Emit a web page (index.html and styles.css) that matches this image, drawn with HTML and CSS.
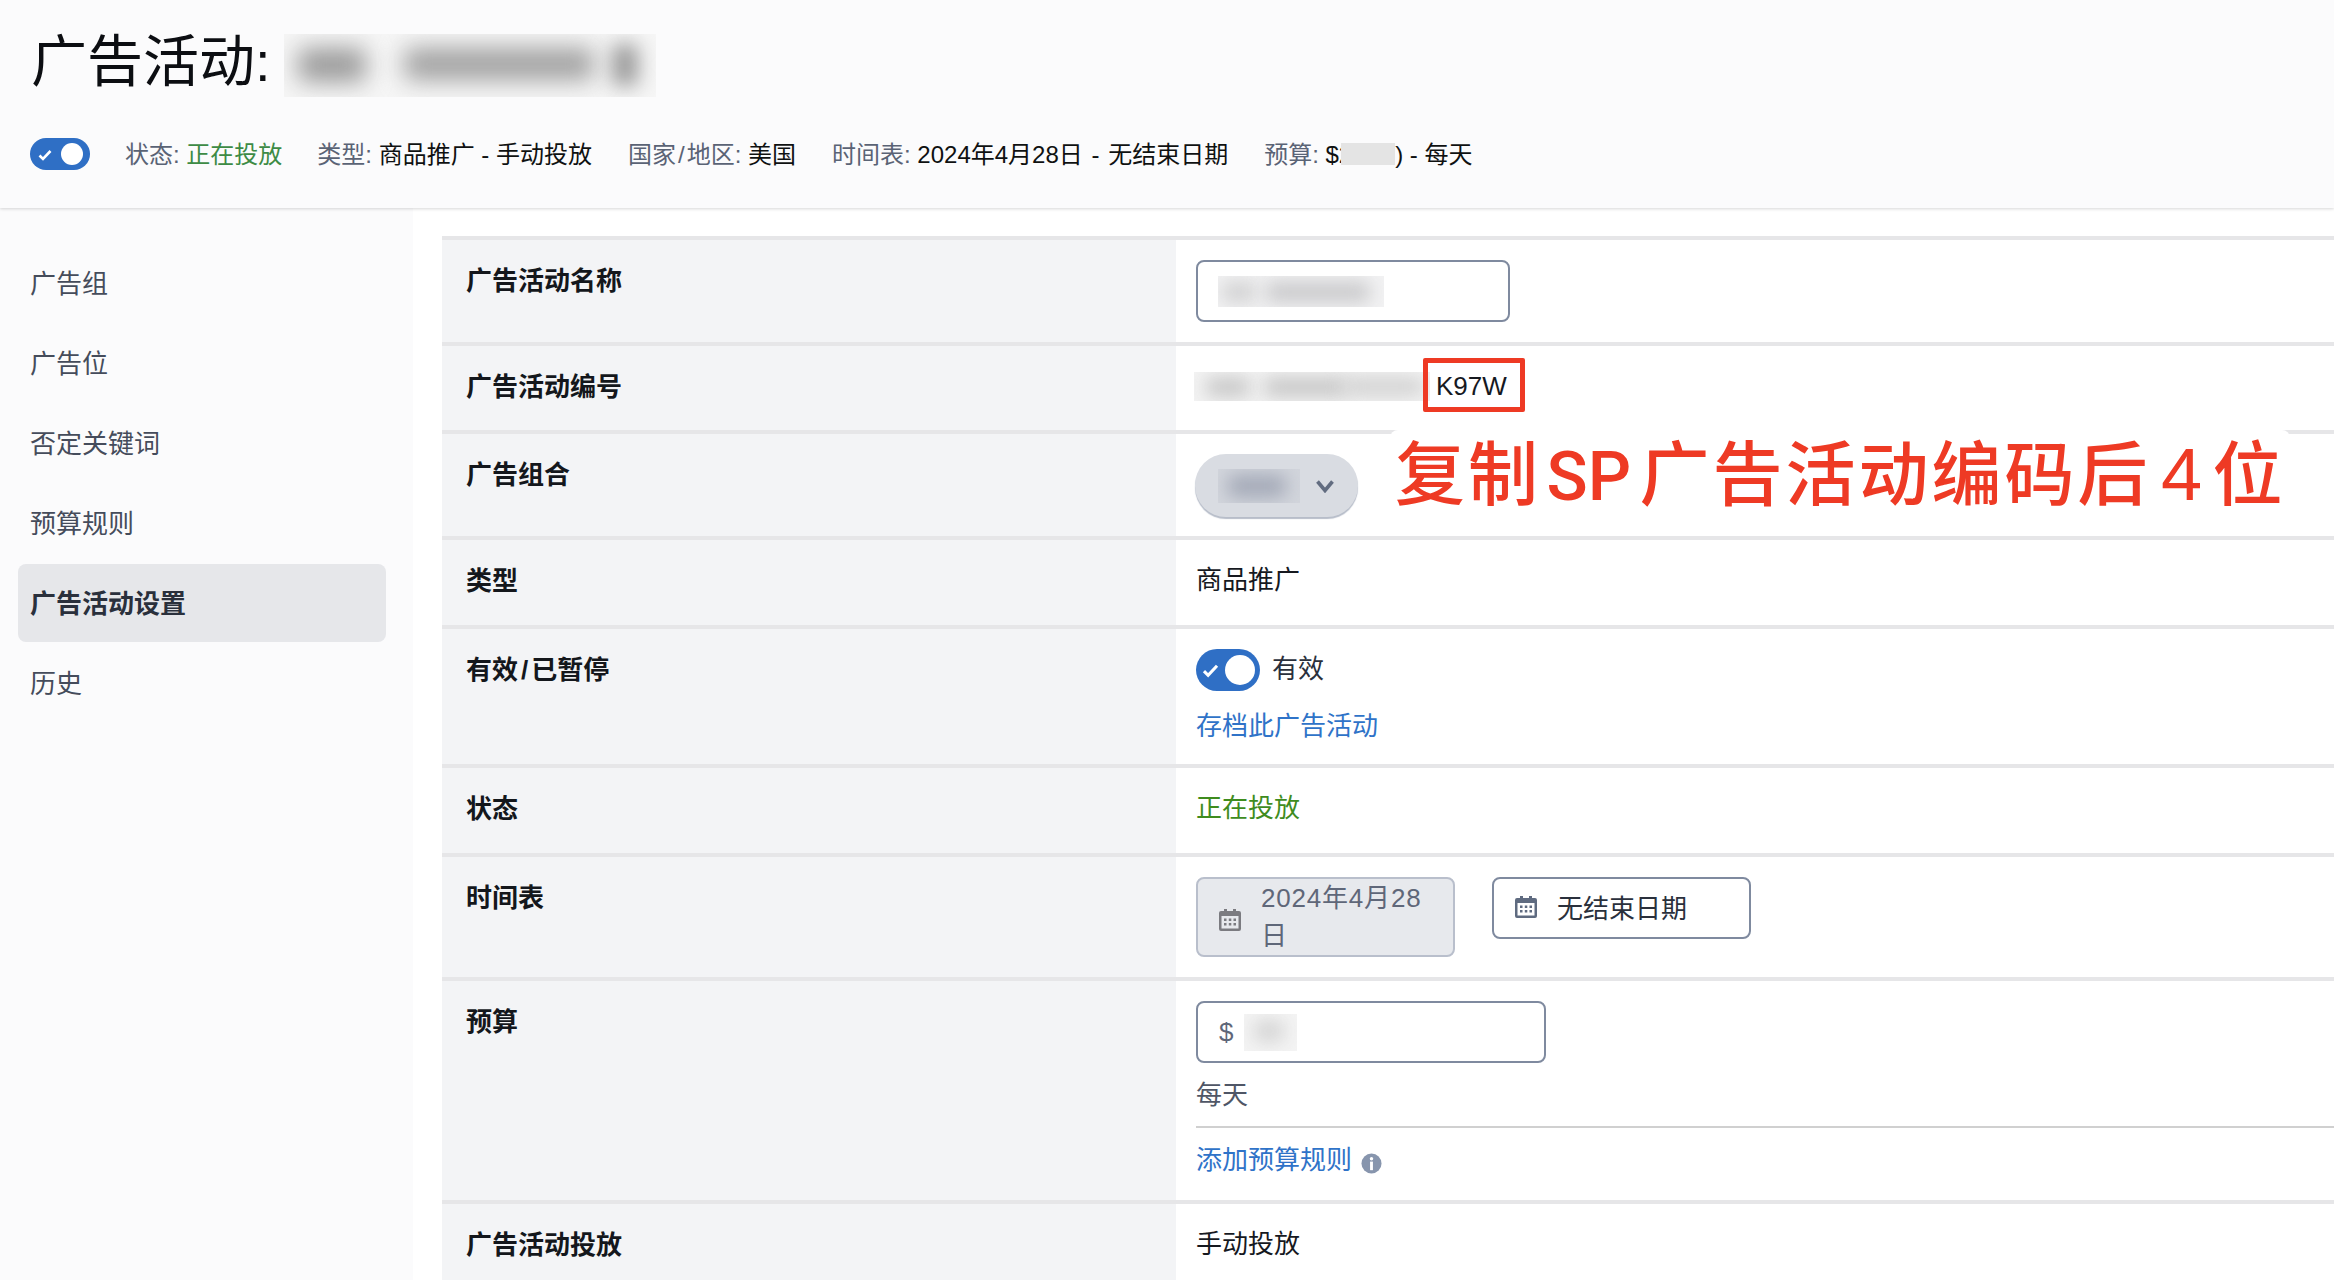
FILE: index.html
```html
<!DOCTYPE html>
<html lang="zh-CN">
<head>
<meta charset="utf-8">
<title>广告活动设置</title>
<link rel="stylesheet" href="styles.css">
</head>
<body>
<header class="header">
  <div class="title-row">
    <h1 class="title">广告活动:</h1>
    <div class="blur-box title-blur"><i class="blob t1"></i><i class="blob t2"></i><i class="blob t3"></i></div>
  </div>
  <div class="meta">
    <span class="toggle toggle-sm"><svg class="check" viewBox="0 0 16 16"><path d="M2.500 8.500l3.500 3.500L13.500 4" fill="none" stroke="#fff" stroke-width="2.600"/></svg><i class="knob"></i></span>
    <span class="meta-item first"><span class="key">状态:</span> <span class="green-soft">正在投放</span></span>
    <span class="meta-item"><span class="key">类型:</span> 商品推广 - 手动投放</span>
    <span class="meta-item"><span class="key">国家<span class="slash-sm">/</span>地区:</span> 美国</span>
    <span class="meta-item"><span class="key">时间表:</span> 2024年4月28日<span class="dash"> - </span>无结束日期</span>
    <span class="meta-item"><span class="key">预算:</span> $2<i class="budget-mask"></i>) - 每天</span>
  </div>
</header>
<div class="main">
  <nav class="sidebar">
    <a class="nav-item">广告组</a>
    <a class="nav-item">广告位</a>
    <a class="nav-item">否定关键词</a>
    <a class="nav-item">预算规则</a>
    <a class="nav-item active">广告活动设置</a>
    <a class="nav-item">历史</a>
  </nav>
  <section class="content">
    <div class="row">
      <div class="label">广告活动名称</div>
      <div class="value form-value">
        <div class="input name-input"><div class="blur-box name-blur"><i class="blob n1"></i><i class="blob n2"></i></div></div>
      </div>
    </div>
    <div class="row">
      <div class="label">广告活动编号</div>
      <div class="value id-value"><div class="blur-box id-blur"><i class="blob i1"></i><i class="blob i2"></i><i class="blob i3"></i></div><span class="id-tail">K97W</span></div>
    </div>
    <div class="row">
      <div class="label">广告组合</div>
      <div class="value pill-value">
        <div class="pill"><div class="blur-box pill-blur"><i class="blob p1"></i></div>
          <svg class="chevron" viewBox="0 0 20 14"><path d="M2.500 2.500l7.500 9 7.500-9" fill="none" stroke="#626c80" stroke-width="3.600"/></svg>
        </div>
      </div>
    </div>
    <div class="row">
      <div class="label">类型</div>
      <div class="value">商品推广</div>
    </div>
    <div class="row">
      <div class="label">有效<span class="slash">/</span>已暂停</div>
      <div class="value form-value">
        <div class="toggle-line">
          <span class="toggle"><svg class="check" viewBox="0 0 16 16"><path d="M2.500 8.500l3.500 3.500L13.500 4" fill="none" stroke="#fff" stroke-width="2.600"/></svg><i class="knob"></i></span>
          <span class="toggle-text">有效</span>
        </div>
        <a class="link archive">存档此广告活动</a>
      </div>
    </div>
    <div class="row">
      <div class="label">状态</div>
      <div class="value green">正在投放</div>
    </div>
    <div class="row">
      <div class="label">时间表</div>
      <div class="value form-value dates">
        <div class="date disabled">
          <svg class="cal" viewBox="0 0 22 22"><path d="M5 0h3v2h6V0h3v2h3a2 2 0 0 1 2 2v16a2 2 0 0 1-2 2H2a2 2 0 0 1-2-2V4a2 2 0 0 1 2-2h3z" fill="#7b7b80"/><rect x="2.500" y="7" width="17" height="12.500" fill="#e7e9ed"/><path d="M5 9.500h2.500V12H5zM9.800 9.500h2.500V12H9.800zM14.500 9.500H17V12h-2.500zM5 14h2.500v2.500H5zM9.800 14h2.500v2.500H9.800zM14.500 14H17v2.500h-2.500z" fill="#7b7b80"/></svg>
          <span class="date-text">2024年4月28日</span>
        </div>
        <div class="date">
          <svg class="cal" viewBox="0 0 22 22"><path d="M5 0h3v2h6V0h3v2h3a2 2 0 0 1 2 2v16a2 2 0 0 1-2 2H2a2 2 0 0 1-2-2V4a2 2 0 0 1 2-2h3z" fill="#5f6b80"/><rect x="2.500" y="7" width="17" height="12.500" fill="#fff"/><path d="M5 9.500h2.500V12H5zM9.800 9.500h2.500V12H9.800zM14.500 9.500H17V12h-2.500zM5 14h2.500v2.500H5zM9.800 14h2.500v2.500H9.800zM14.500 14H17v2.500h-2.500z" fill="#5f6b80"/></svg>
          <span class="date-text plain">无结束日期</span>
        </div>
      </div>
    </div>
    <div class="row">
      <div class="label">预算</div>
      <div class="value form-value budget">
        <div class="input budget-input"><span class="dollar">$</span><div class="blur-box amount-blur"><i class="blob a1"></i></div></div>
        <div class="per-day">每天</div>
        <div class="divider"></div>
        <div class="rule-line"><a class="link">添加预算规则</a>
          <svg class="info" viewBox="0 0 22 22"><circle cx="11" cy="11" r="10.500" fill="#8795ad"/><circle cx="11" cy="6" r="1.800" fill="#fff"/><rect x="9.500" y="9" width="3" height="9" fill="#fff"/></svg>
        </div>
      </div>
    </div>
    <div class="row">
      <div class="label">广告活动投放</div>
      <div class="value">手动投放</div>
    </div>
    <div class="id-highlight"></div>
    <div class="callout">复制 <span class="callout-latin">SP</span> 广告活动编码后 <span class="callout-num">4</span> 位</div>
  </section>
</div>
</body>
</html>
```

FILE: styles.css
```css
* { box-sizing: border-box; }
html, body { margin: 0; height: 1280px; overflow: hidden; background: #fff; }
body {
  font-family: "Liberation Sans", "Noto Sans CJK SC", sans-serif;
  font-size: 26px;
  line-height: 36px;
  color: #16191f;
}
a { color: inherit; text-decoration: none; }

.header {
  height: 208px;
  padding: 29px 0 0 32px;
  background: #fbfbfc;
  box-shadow: 0 1px 3px rgba(0, 0, 0, .16);
  position: relative;
}
.title-row { display: flex; align-items: flex-start; height: 64px; }
.title { margin: 1px 0 0 -1px; font-size: 56px; line-height: 64px; font-weight: 400; color: #0c0e12; }
.meta {
  display: flex; align-items: center; height: 32px; margin: 45px 0 0 -2px;
  font-size: 24px; color: #0f1111; white-space: nowrap;
}
.meta-item { margin-right: 36px; padding-top: 2px; }
.meta-item.first { margin-right: 35px; }
.key { color: #5a6375; }
.slash-sm { padding: 0 2px; }
.green-soft { color: #3d8b45; }
.dash { margin: 0 2px; }
.budget-mask { display: inline-block; width: 54px; height: 22px; margin-left: -11px; background: #e4e4e4; vertical-align: -2px; position: relative; }

.blur-box { overflow: hidden; position: relative; flex: none; }
.blob { position: absolute; display: block; filter: blur(9px); border-radius: 6px; }

.title-blur { width: 372px; height: 63px; margin: 5px 0 0 13px; background: #f6f6f6; }
.t1 { left: 14px; top: 14px; width: 68px; height: 34px; background: #9a9a9a; filter: blur(12px); }
.t2 { left: 120px; top: 14px; width: 190px; height: 32px; background: #a0a0a0; filter: blur(12px); }
.t3 { left: 328px; top: 10px; width: 26px; height: 42px; background: #999; filter: blur(10px); }

.toggle {
  position: relative; display: inline-block; flex: none; width: 64px; height: 42px;
  border-radius: 21px; background: #2f6fc5;
}
.toggle .knob { position: absolute; right: 5px; top: 6px; width: 30px; height: 30px; border-radius: 50%; background: #fff; }
.toggle .check { position: absolute; left: 5px; top: 12px; width: 19px; height: 19px; }
.toggle-sm { width: 60px; height: 32px; margin-right: 35px; border-radius: 16px; }
.toggle-sm .knob { right: 7px; top: 5px; width: 22px; height: 22px; }
.toggle-sm .check { left: 7px; top: 9px; width: 16px; height: 16px; }

.main { display: flex; height: 1072px; }
.sidebar { width: 413px; flex: none; padding: 36px 27px 0 18px; background: #fbfbfc; display: flex; flex-direction: column; gap: 2px; }
.nav-item { display: flex; align-items: center; height: 78px; padding: 1px 0 0 12px; border-radius: 8px; color: #454c5b; }
.nav-item.active { background: #e6e7ea; font-weight: 700; color: #2a303c; }

.content { flex: 1; min-width: 0; position: relative; padding: 28px 0 0 29px; }
.row { display: grid; grid-template-columns: 734px 1fr; border-top: 4px solid #e6e6e8; }
.label { background: #f3f4f6; padding: 23px 24px 0; font-weight: 700; color: #14171c; }
.slash { padding: 0 3px; }
.value { padding: 22px 0 27px 20px; color: #16191f; }
.form-value { padding: 20px 0 20px 20px; }
.green { color: #3f8c1e; }
.link { color: #2f73c8; }

.input { display: flex; align-items: center; height: 62px; border: 2px solid #7f8a9f; border-radius: 8px; background: #fff; }
.name-input { width: 314px; padding-left: 20px; }
.name-blur { width: 166px; height: 31px; background: #f2f2f3; }
.n1 { left: 4px; top: 6px; width: 34px; height: 20px; background: #d0d0d1; }
.n2 { left: 48px; top: 6px; width: 104px; height: 20px; background: #c8c8ca; }

.id-value { display: flex; align-items: center; padding-left: 18px; padding-bottom: 26px; height: 84px; }
.id-blur { width: 236px; height: 29px; background: #f3f3f3; }
.i1 { left: 12px; top: 6px; width: 44px; height: 18px; background: #c4c4c4; }
.i2 { left: 70px; top: 6px; width: 84px; height: 18px; background: #c4c4c4; }
.i3 { left: 150px; top: 6px; width: 80px; height: 17px; background: #cfcfcf; }
.id-tail { margin-left: 6px; }

.pill-value { padding: 20px 0 19px 19px; }
.pill {
  display: flex; align-items: center; width: 163px; height: 63px; padding: 0 18px 0 23px;
  border-radius: 31px; background: #d9dce2; box-shadow: 0 2px 1px #b7bdc9;
}
.pill-blur { width: 82px; height: 34px; background: #d2d5dc; }
.p1 { left: 10px; top: 6px; width: 58px; height: 22px; background: #a2a8b6; }
.chevron { width: 20px; height: 14px; margin-left: 15px; }

.toggle-line { display: flex; align-items: center; height: 42px; gap: 12px; }
.toggle-text { color: #2a303c; margin-top: -2px; }
.archive { display: block; margin: 17px 0 0; }

.dates { display: flex; align-items: flex-start; gap: 37px; }
.date {
  display: flex; align-items: center; width: 259px; height: 62px; padding: 0 16px 0 21px;
  border: 2px solid #7f8a9f; border-radius: 8px; background: #fff; color: #2a303c;
}
.date.disabled { height: 80px; background: #e7e9ed; border-color: #b9bfcc; color: #5f6779; line-height: 38px; }
.date.disabled .cal { margin-top: 6px; }
.date.disabled .date-text { letter-spacing: .8px; }
.cal { width: 22px; height: 22px; flex: none; margin-right: 20px; margin-top: -2px; }
.date-text { display: block; }
.date-text.plain { padding-top: 1px; }

.budget-input { width: 350px; padding-left: 21px; color: #5f6779; }
.dollar { width: 25px; }
.amount-blur { width: 53px; height: 37px; background: #f4f4f4; }
.a1 { left: 10px; top: 6px; width: 30px; height: 22px; background: #d4d4d4; }
.per-day { margin-top: 14px; color: #4f5666; }
.divider { height: 2px; margin-top: 13px; background: #d0d0d0; }
.rule-line { display: flex; align-items: center; margin: 14px 0 2px; }
.info { width: 21px; height: 21px; margin: 6px 0 0 9px; }

.id-highlight {
  position: absolute; left: 1010px; top: 150px; width: 102px; height: 54px;
  border: 5px solid #ee3a24; border-radius: 2px;
}
.callout {
  position: absolute; left: 977px; top: 222px; width: 900px; height: 93px; padding: 3px 0 0 5px;
  background: #fff; border-radius: 8px; color: #ee3a24; font-weight: 500;
  font-size: 70px; line-height: 84px; letter-spacing: 3px; word-spacing: -14px; white-space: nowrap;
}
.callout-latin { font-family: Roboto, sans-serif; font-size: 68px; letter-spacing: 0; margin-left: -3px; }
.callout-num { font-size: 74px; letter-spacing: 0; margin: 0 2px; }
```
